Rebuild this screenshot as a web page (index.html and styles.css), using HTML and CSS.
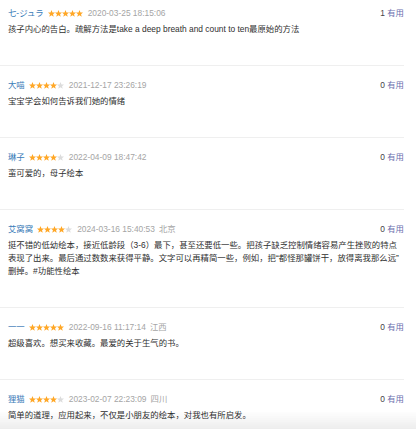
FILE: index.html
```html
<!DOCTYPE html>
<html lang="zh-CN">
<head>
<meta charset="utf-8">
<title>短评</title>
<link rel="stylesheet" href="styles.css">
</head>
<body>
<svg class="defs" width="0" height="0" aria-hidden="true">
  <defs>
    <polygon id="star" points="5,0 6.4,3.5 10,3.6 7.2,5.9 8.2,9.7 5,7.6 1.8,9.7 2.8,5.9 0,3.6 3.6,3.5"/>
  </defs>
</svg>
<div class="list">
  <div class="item">
    <div class="head">
      <div class="info">
        <a class="name">七-ジュラ</a>
        <svg class="stars" viewBox="0 0 50 10"><use href="#star" class="on"/><use href="#star" x="10" class="on"/><use href="#star" x="20" class="on"/><use href="#star" x="30" class="on"/><use href="#star" x="40" class="on"/></svg>
        <span class="time">2020-03-25 18:15:06</span>
      </div>
      <div class="vote"><span class="count">1</span> <a class="useful">有用</a></div>
    </div>
    <p class="text">孩子内心的告白。疏解方法是take a deep breath and count to ten最原始的方法</p>
  </div>
  <div class="item">
    <div class="head">
      <div class="info">
        <a class="name">大喵</a>
        <svg class="stars" viewBox="0 0 50 10"><use href="#star" class="on"/><use href="#star" x="10" class="on"/><use href="#star" x="20" class="on"/><use href="#star" x="30" class="on"/><use href="#star" x="40" class="off"/></svg>
        <span class="time">2021-12-17 23:26:19</span>
      </div>
      <div class="vote"><span class="count">0</span> <a class="useful">有用</a></div>
    </div>
    <p class="text">宝宝学会如何告诉我们她的情绪</p>
  </div>
  <div class="item">
    <div class="head">
      <div class="info">
        <a class="name">琳子</a>
        <svg class="stars" viewBox="0 0 50 10"><use href="#star" class="on"/><use href="#star" x="10" class="on"/><use href="#star" x="20" class="on"/><use href="#star" x="30" class="on"/><use href="#star" x="40" class="off"/></svg>
        <span class="time">2022-04-09 18:47:42</span>
      </div>
      <div class="vote"><span class="count">0</span> <a class="useful">有用</a></div>
    </div>
    <p class="text">蛮可爱的，母子绘本</p>
  </div>
  <div class="item">
    <div class="head">
      <div class="info">
        <a class="name">艾窝窝</a>
        <svg class="stars" viewBox="0 0 50 10"><use href="#star" class="on"/><use href="#star" x="10" class="on"/><use href="#star" x="20" class="on"/><use href="#star" x="30" class="on"/><use href="#star" x="40" class="off"/></svg>
        <span class="time">2024-03-16 15:40:53</span>
        <span class="loc">北京</span>
      </div>
      <div class="vote"><span class="count">0</span> <a class="useful">有用</a></div>
    </div>
    <p class="text">挺不错的低幼绘本，接近低龄段（3-6）最下，甚至还要低一些。把孩子缺乏控制情绪容易产生挫败的特点表现了出来。最后通过数数来获得平静。文字可以再精简一些，例如，把“都怪那罐饼干，放得离我那么远”删掉。#功能性绘本</p>
  </div>
  <div class="item">
    <div class="head">
      <div class="info">
        <a class="name">一一</a>
        <svg class="stars" viewBox="0 0 50 10"><use href="#star" class="on"/><use href="#star" x="10" class="on"/><use href="#star" x="20" class="on"/><use href="#star" x="30" class="on"/><use href="#star" x="40" class="on"/></svg>
        <span class="time">2022-09-16 11:17:14</span>
        <span class="loc">江西</span>
      </div>
      <div class="vote"><span class="count">0</span> <a class="useful">有用</a></div>
    </div>
    <p class="text">超级喜欢。想买来收藏。最爱的关于生气的书。</p>
  </div>
  <div class="item">
    <div class="head">
      <div class="info">
        <a class="name">狸猫</a>
        <svg class="stars" viewBox="0 0 50 10"><use href="#star" class="on"/><use href="#star" x="10" class="on"/><use href="#star" x="20" class="on"/><use href="#star" x="30" class="on"/><use href="#star" x="40" class="off"/></svg>
        <span class="time">2023-02-07 22:23:09</span>
        <span class="loc">四川</span>
      </div>
      <div class="vote"><span class="count">0</span> <a class="useful">有用</a></div>
    </div>
    <p class="text">简单的道理，应用起来，不仅是小朋友的绘本，对我也有所启发。</p>
  </div>
</div>
<div class="fade"></div>
</body>
</html>
```
FILE: styles.css
```css
html, body {
  margin: 0;
  padding: 0;
  background: #ffffff;
}
body {
  font-family: "Liberation Sans", "Noto Sans CJK SC", sans-serif;
  font-size: 8.4px;
  color: #2f2f2f;
  overflow: hidden;
}
.defs {
  position: absolute;
  width: 0;
  height: 0;
}
.list {
  width: 404px;
}
.item {
  padding: 13px 0 29px 8px;
  border-bottom: 1px solid #efefef;
}
.item:first-child {
  padding-top: 7px;
}
.head {
  display: flex;
  justify-content: space-between;
  align-items: center;
  height: 13px;
  line-height: 13px;
}
.info {
  display: flex;
  align-items: center;
  gap: 4px;
}
.name {
  color: #3a7cb8;
}
.stars {
  width: 35px;
  height: 7px;
  margin-right: 1px;
  display: block;
}
.stars .on {
  fill: #ffa726;
}
.stars .off {
  fill: #dcdcdc;
}
.time, .loc {
  color: #a5a5a5;
}
.vote {
  color: #444444;
}
.useful {
  color: #6a6eae;
}
.text {
  margin: 3px 0 0;
  line-height: 13px;
  color: #2f2f2f;
}
.fade {
  position: fixed;
  left: 0;
  right: 0;
  bottom: 0;
  height: 18px;
  background: linear-gradient(to bottom, rgba(0, 0, 0, 0), rgba(0, 0, 0, 0.07));
  pointer-events: none;
}
```
